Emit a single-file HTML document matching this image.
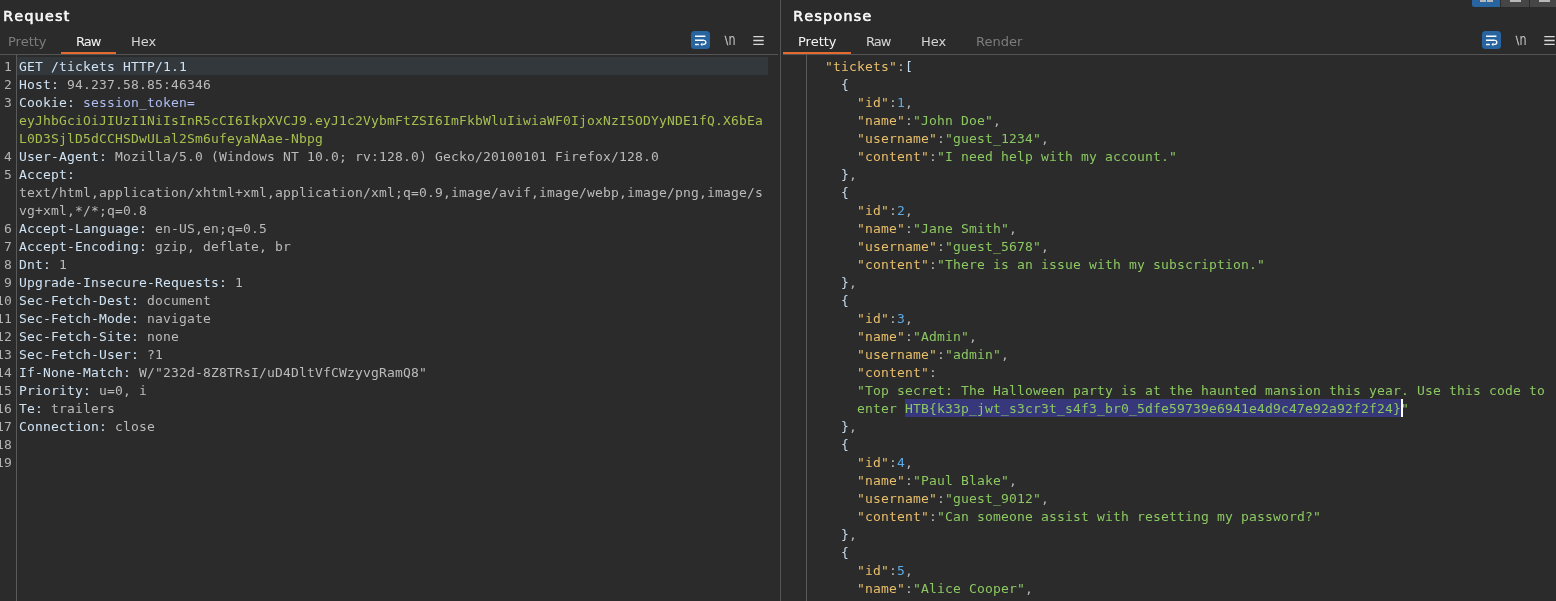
<!DOCTYPE html>
<html><head><meta charset="utf-8">
<style>
*{box-sizing:border-box;margin:0;padding:0}
html,body{width:1556px;height:601px;overflow:hidden;background:#2b2b2b}
body{position:relative;font-family:"DejaVu Sans","Liberation Sans",sans-serif;color:#e8e8e8}
.abs{position:absolute}
.code,.ln,.tab,.title,.nl{will-change:transform}
.title{position:absolute;top:7px;font-weight:normal;font-size:14.3px;line-height:18px;color:#f4f4f4;white-space:nowrap;-webkit-text-stroke:0.35px #f4f4f4;text-shadow:0.4px 0 0 #f4f4f4;letter-spacing:1.25px;font-kerning:none}
.tab{position:absolute;top:34px;font-size:13px;line-height:16px;color:#d6d6d6;white-space:nowrap}
.tab.dim{color:#7c7c7c}
.tab.act{color:#f4f4f4}
.nl{fill:#c4c4c4;font-family:"DejaVu Sans","Liberation Sans",sans-serif}
.hl{position:absolute;background:#e56a2e;height:3px;top:52px}
.sep{position:absolute;height:1px;background:#555;top:54px}
.code{position:absolute;font-family:"DejaVu Sans Mono","Liberation Mono",monospace;font-size:13px;letter-spacing:0.1733px;line-height:18px;white-space:pre;color:#bbbbbb}
.ln{position:absolute;font-family:"DejaVu Sans Mono","Liberation Mono",monospace;font-size:13px;letter-spacing:0.1733px;line-height:18px;white-space:pre;color:#b4b4b4;text-align:right}
.h{color:#cfe3f4}
.v{color:#bbbbbb}
.cn{color:#aebdf2}
.cv{color:#a6c050}
.k{color:#e8bf6a}
.s{color:#8cc862}
.n{color:#5aace8}
.p{color:#c6dcf0}
.c{color:#b9b9b9}
.sel{background:#35357a}
</style></head><body>
<!-- Request pane -->
<div class="title" style="left:3px">Request</div>
<div class="tab dim" style="left:8px">Pretty</div>
<div class="tab act" style="left:76px;letter-spacing:-1px">Raw</div>
<div class="tab" style="left:131px">Hex</div>
<div class="hl" style="left:61px;width:55px"></div>
<div class="sep" style="left:0;width:778px"></div>
<div class="abs" style="left:16px;top:55px;width:1px;height:546px;background:#5a5a5a"></div>
<div class="abs" style="left:17px;top:57px;width:751px;height:18px;background:#33383c"></div>
<div class="ln" style="left:-21px;width:33px;top:58px">1
2
3


4
5


6
7
8
9
10
11
12
13
14
15
16
17
18
19</div>
<div class="code" style="left:19px;top:58px"><span class="h">GET /tickets HTTP/1.1</span>
<span class="h">Host:</span> 94.237.58.85:46346
<span class="h">Cookie:</span> <span class="cn">session_token=</span>
<span class="cv">eyJhbGciOiJIUzI1NiIsInR5cCI6IkpXVCJ9.eyJ1c2VybmFtZSI6ImFkbWluIiwiaWF0IjoxNzI5ODYyNDE1fQ.X6bEa</span>
<span class="cv">L0D3SjlD5dCCHSDwULal2Sm6ufeyaNAae-Nbpg</span>
<span class="h">User-Agent:</span> Mozilla/5.0 (Windows NT 10.0; rv:128.0) Gecko/20100101 Firefox/128.0
<span class="h">Accept:</span>
text/html,application/xhtml+xml,application/xml;q=0.9,image/avif,image/webp,image/png,image/s
vg+xml,*/*;q=0.8
<span class="h">Accept-Language:</span> en-US,en;q=0.5
<span class="h">Accept-Encoding:</span> gzip, deflate, br
<span class="h">Dnt:</span> 1
<span class="h">Upgrade-Insecure-Requests:</span> 1
<span class="h">Sec-Fetch-Dest:</span> document
<span class="h">Sec-Fetch-Mode:</span> navigate
<span class="h">Sec-Fetch-Site:</span> none
<span class="h">Sec-Fetch-User:</span> ?1
<span class="h">If-None-Match:</span> W/"232d-8Z8TRsI/uD4DltVfCWzyvgRamQ8"
<span class="h">Priority:</span> u=0, i
<span class="h">Te:</span> trailers
<span class="h">Connection:</span> close</div>
<!-- request toolbar icons -->
<div class="abs" style="left:691px;top:31px;width:19px;height:18px;border-radius:3.5px;background:#2764a0"></div>
<svg class="abs" style="left:691px;top:31px" width="19" height="18" viewBox="0 0 19 18"><g fill="none" stroke="#fff" stroke-width="1.5"><path d="M4 5.2h10.4M4 9.3h8.8M4 13.4h3.8"/><path d="M12.7 9.3h.1a2.05 2.05 0 0 1 0 4.1H11.4" stroke-width="1.3"/></g><path d="M11.4 11.6l-2 1.8 2 1.8z" fill="#fff"/></svg>
<svg class="abs nl" style="left:724px;top:30px" width="22" height="20" viewBox="0 0 22 20"><text x="0.7" y="13.75" font-size="10" transform="scale(1.0,1)" stroke="#c4c4c4" stroke-width="0.3">\</text><text y="15.05" x="6.55" font-size="16.4" transform="scale(0.68,1)">n</text></svg>
<svg class="abs" style="left:752px;top:34px" width="13" height="13" viewBox="0 0 13 13"><path d="M1.3 2.6h10.4M1.3 6.5h10.4M1.3 10.3h10.4" stroke="#d8d8d8" stroke-width="1.3"/></svg>
<!-- divider -->
<div class="abs" style="left:780px;top:0;width:1px;height:601px;background:#555"></div>
<!-- Response pane -->
<div class="title" style="left:793px">Response</div>
<div class="tab act" style="left:798px">Pretty</div>
<div class="tab" style="left:866px;letter-spacing:-1px">Raw</div>
<div class="tab" style="left:921px">Hex</div>
<div class="tab dim" style="left:976px">Render</div>
<div class="hl" style="left:783px;width:68px"></div>
<div class="sep" style="left:783px;width:773px"></div>
<div class="abs" style="left:806px;top:55px;width:1px;height:546px;background:#5a5a5a"></div>
<div class="abs" style="left:905px;top:399px;width:496px;height:18px;background:#37377c"></div>
<div class="abs" style="left:1401px;top:399px;width:2px;height:18px;background:#ffffff"></div>
<div class="code p" style="left:825px;top:58px"><span class="k">"tickets"</span><span class="c">:</span>[
  {
    <span class="k">"id"</span><span class="c">:</span><span class="n">1</span><span class="c">,</span>
    <span class="k">"name"</span><span class="c">:</span><span class="s">"John Doe"</span><span class="c">,</span>
    <span class="k">"username"</span><span class="c">:</span><span class="s">"guest_1234"</span><span class="c">,</span>
    <span class="k">"content"</span><span class="c">:</span><span class="s">"I need help with my account."</span>
  }<span class="c">,</span>
  {
    <span class="k">"id"</span><span class="c">:</span><span class="n">2</span><span class="c">,</span>
    <span class="k">"name"</span><span class="c">:</span><span class="s">"Jane Smith"</span><span class="c">,</span>
    <span class="k">"username"</span><span class="c">:</span><span class="s">"guest_5678"</span><span class="c">,</span>
    <span class="k">"content"</span><span class="c">:</span><span class="s">"There is an issue with my subscription."</span>
  }<span class="c">,</span>
  {
    <span class="k">"id"</span><span class="c">:</span><span class="n">3</span><span class="c">,</span>
    <span class="k">"name"</span><span class="c">:</span><span class="s">"Admin"</span><span class="c">,</span>
    <span class="k">"username"</span><span class="c">:</span><span class="s">"admin"</span><span class="c">,</span>
    <span class="k">"content"</span><span class="c">:</span>
    <span class="s">"Top secret: The Halloween party is at the haunted mansion this year. Use this code to</span>
    <span class="s">enter HTB{k33p_jwt_s3cr3t_s4f3_br0_5dfe59739e6941e4d9c47e92a92f2f24}"</span>
  }<span class="c">,</span>
  {
    <span class="k">"id"</span><span class="c">:</span><span class="n">4</span><span class="c">,</span>
    <span class="k">"name"</span><span class="c">:</span><span class="s">"Paul Blake"</span><span class="c">,</span>
    <span class="k">"username"</span><span class="c">:</span><span class="s">"guest_9012"</span><span class="c">,</span>
    <span class="k">"content"</span><span class="c">:</span><span class="s">"Can someone assist with resetting my password?"</span>
  }<span class="c">,</span>
  {
    <span class="k">"id"</span><span class="c">:</span><span class="n">5</span><span class="c">,</span>
    <span class="k">"name"</span><span class="c">:</span><span class="s">"Alice Cooper"</span><span class="c">,</span></div>
<!-- response toolbar -->
<div class="abs" style="left:1482px;top:31px;width:19px;height:18px;border-radius:3.5px;background:#2764a0"></div>
<svg class="abs" style="left:1482px;top:31px" width="19" height="18" viewBox="0 0 19 18"><g fill="none" stroke="#fff" stroke-width="1.5"><path d="M4 5.2h10.4M4 9.3h8.8M4 13.4h3.8"/><path d="M12.7 9.3h.1a2.05 2.05 0 0 1 0 4.1H11.4" stroke-width="1.3"/></g><path d="M11.4 11.6l-2 1.8 2 1.8z" fill="#fff"/></svg>
<svg class="abs nl" style="left:1515px;top:30px" width="22" height="20" viewBox="0 0 22 20"><text x="0.7" y="13.75" font-size="10" transform="scale(1.0,1)" stroke="#c4c4c4" stroke-width="0.3">\</text><text y="15.05" x="6.55" font-size="16.4" transform="scale(0.68,1)">n</text></svg>
<svg class="abs" style="left:1543px;top:34px" width="13" height="13" viewBox="0 0 13 13"><path d="M1.3 2.6h10.4M1.3 6.5h10.4M1.3 10.3h10.4" stroke="#d8d8d8" stroke-width="1.3"/></svg>
<!-- top-right layout buttons -->
<div class="abs" style="left:1472px;top:-8px;width:28px;height:15px;border-radius:0 0 0 2.5px;background:#2764a0"></div>
<div class="abs" style="left:1501px;top:-8px;width:28px;height:15px;background:#464646"></div>
<div class="abs" style="left:1530px;top:-8px;width:28px;height:15px;background:#464646"></div>
<div class="abs" style="left:1480px;top:0;width:6px;height:2px;background:#b8b8b8"></div>
<div class="abs" style="left:1487px;top:0;width:6px;height:2px;background:#b8b8b8"></div>
<div class="abs" style="left:1510px;top:0;width:11px;height:2px;background:#b8b8b8"></div>
<div class="abs" style="left:1539px;top:0;width:11px;height:2px;background:#b8b8b8"></div>
</body></html>
